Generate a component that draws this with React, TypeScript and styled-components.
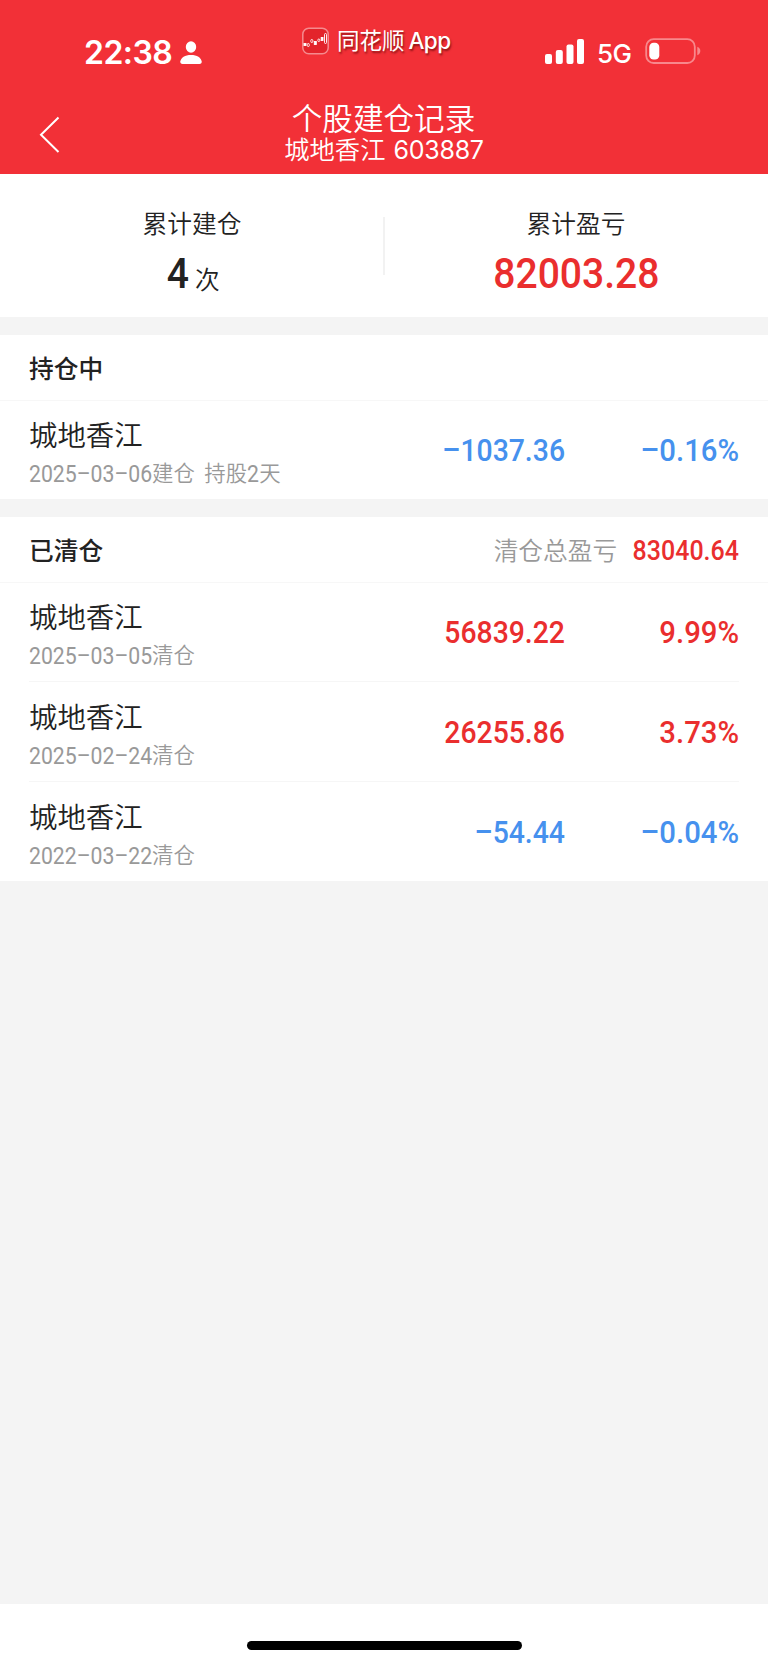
import React from "react";
import styled, { createGlobalStyle } from "styled-components";

const RED = "#ea2e2e";
const BLUE = "#4691ee";
const cjk = `"Noto Sans CJK SC", sans-serif`;

const GlobalStyle = createGlobalStyle`
  * { box-sizing: border-box; }
  body { margin: 0; background: #f4f4f4; font-family: ${cjk}; color: #222; }
`;

const Screen = styled.div`
  width: 768px;
  height: 1665px;
  display: flex;
  flex-direction: column;
  background: #f4f4f4;
  overflow: hidden;
`;

const Header = styled.header`
  flex: none;
  height: 174px;
  background: #f23037;
  color: #fff;
`;

const StatusBar = styled.div`
  display: grid;
  grid-template-columns: 302px 243px 1fr;
  height: 90px;
`;

const Clock = styled.div`
  display: flex;
  align-items: center;
  gap: 8px;
  height: 50px;
  margin: 28px 0 0 84px;
  font: 600 32px/50px Inter, sans-serif;
  letter-spacing: -0.55px;
`;

const AppBadge = styled.div`
  display: flex;
  align-items: center;
  height: 30px;
  margin-top: 26px;
  text-shadow: 1px 2px 2px rgba(80, 0, 0, 0.6);
`;

const BadgeName = styled.span`
  margin: 0 4px 4px 8px;
  font: 400 22.5px/30px ${cjk};
`;

const Latin = styled.span`
  margin-bottom: 1px;
  font: 500 22.5px/30px Inter, sans-serif;
  letter-spacing: -0.6px;
`;

const Signals = styled.div`
  display: flex;
  align-items: center;
  height: 50px;
  margin-top: 26px;
`;

const Network = styled.span`
  width: 48px;
  margin-left: 13px;
  padding-top: 5px;
  font: 500 26px/50px Inter, sans-serif;
  letter-spacing: -0.6px;
`;

const NavBar = styled.nav`
  display: grid;
  grid-template-columns: 80px 1fr 80px;
  height: 84px;
`;

const BackButton = styled.button`
  display: flex;
  align-items: flex-start;
  padding: 26px 0 0 39px;
  border: 0;
  background: none;
  color: inherit;
`;

const Titles = styled.div`
  text-align: center;
  padding-top: 9px;
`;

const Title = styled.h1`
  margin: 0 1px 0 0;
  font: 350 30.6px/36px ${cjk};
`;

const Subtitle = styled.div`
  display: flex;
  justify-content: center;
  gap: 8px;
  font: 350 25.3px/26px ${cjk};
`;

const Code = styled.span`
  padding-top: 2px;
  font: 400 25px/26px Inter, sans-serif;
  letter-spacing: -0.25px;
`;

const Summary = styled.section`
  flex: none;
  display: flex;
  height: 143px;
  padding-top: 29px;
  background: #fff;
`;

const Stat = styled.div`
  flex: 1;
  display: flex;
  flex-direction: column;
  align-items: center;
`;

const StatLabel = styled.div`
  font: 350 24.7px/38px ${cjk};
`;

const StatValue = styled.div`
  display: flex;
  align-items: center;
  height: 62px;
  margin-top: 2px;
`;

const Unit = styled.span`
  margin: 8px -2px 0 5px;
  font: 350 24.7px/40px ${cjk};
`;

const Divider = styled.div`
  width: 2px;
  height: 58px;
  margin: 14px -1px 0;
  background: #f2f2f2;
`;

const Figure = styled.span<{ $size: number; $color?: string; $center?: boolean; $squeeze?: number }>`
  font: 500 ${(p) => p.$size}px/1 Roboto, sans-serif;
  color: ${(p) => p.$color ?? "inherit"};
  transform: scaleX(${(p) => p.$squeeze ?? 0.93});
  transform-origin: ${(p) => (p.$center ? "center" : "right")};
  text-align: right;
  white-space: nowrap;
`;

const Section = styled.section`
  flex: none;
  margin-top: 18px;
  background: #fff;
`;

const SectionHead = styled.div`
  display: flex;
  align-items: center;
  height: 65.5px;
  padding: 0 29px 1px;
  border-bottom: 1.5px solid #f7f7f7;
`;

const SectionTitle = styled.h2`
  flex: 1;
  margin: 0;
  font: 500 24.7px/40px ${cjk};
`;

const TotalLabel = styled.span`
  margin-right: 7px;
  font: 350 24.7px/40px ${cjk};
  color: #999;
`;

const TotalValue = styled(Figure)`
  margin-top: 5px;
`;

const List = styled.ul`
  margin: 0;
  padding: 0 29px;
  list-style: none;
`;

const Row = styled.li`
  display: grid;
  grid-template-columns: 1fr 240px 174px;
  align-items: center;
  height: 100px;
  & + & { border-top: 1.5px solid #f6f6f6; }
  &:first-child { height: 98.5px; }
`;

const RowFigure = styled(Figure)`
  padding-top: 2px;
`;

const Stock = styled.div`
  height: 82px;
  padding-top: 5px;
`;

const StockName = styled.div`
  font: 350 28.4px/40px ${cjk};
`;

const Detail = styled.div`
  display: flex;
  height: 37px;
  font: 350 21.4px/36px ${cjk};
  color: #999;
  white-space: pre;
`;

const Digits = styled.span<{ $width: number }>`
  width: ${(p) => p.$width}px;
  padding-top: 2px;
  font: 400 23.3px/36px Roboto, sans-serif;
  transform: scaleX(0.91);
  transform-origin: left;
`;

const Filler = styled.div`
  flex: 1;
`;

const HomeArea = styled.footer`
  flex: none;
  height: 61px;
  padding-top: 37px;
  background: #fff;
`;

const HomeBar = styled.div`
  width: 275px;
  height: 9px;
  margin: 0 auto;
  border-radius: 5px;
  background: #000;
`;

const PersonIcon = () => (
  <svg width="22" height="24" viewBox="0 0 22 24" fill="#fff">
    <ellipse cx="11" cy="6" rx="5.2" ry="5.8" />
    <path d="M0.3 20.5C0.8 16.6 5 13.9 11 13.9s10.200 2.700 10.700 6.600c.2 1.600-.7 2.500-2.200 2.500h-17C1 23 .1 22.100.3 20.500z" />
  </svg>
);

const AppIcon = () => (
  <svg width="27" height="28" viewBox="0 0 27 28" fill="none">
    <rect x="0.8" y="1.300" width="25.400" height="25.400" rx="6" fill="#e3242b" stroke="#f58a8e" strokeWidth="1.500" />
    <g stroke="#fff" strokeWidth="0.900">
      <rect x="2" y="16.500" width="2" height="2" fill="#fff" />
      <rect x="5.300" y="16.500" width="2" height="3" rx="1" />
      <rect x="8.800" y="12.500" width="2" height="3" rx="1" />
      <rect x="12.300" y="14.500" width="2" height="3" fill="#fff" />
      <rect x="15.800" y="12" width="2" height="2.500" rx="1" />
      <rect x="19.200" y="10.500" width="1.800" height="3" fill="#fff" />
      <rect x="22.500" y="6.500" width="2" height="10" rx="1" />
    </g>
  </svg>
);

const SignalIcon = () => (
  <svg width="39" height="25" viewBox="0 0 39 25" fill="#fff">
    <rect x="0" y="15" width="7" height="10" rx="2" />
    <rect x="10.800" y="11" width="7" height="14" rx="2" />
    <rect x="21.500" y="5.500" width="7" height="19.500" rx="2" />
    <rect x="32" y="0" width="7" height="25" rx="2" />
  </svg>
);

const BatteryIcon = () => (
  <svg width="57" height="26" viewBox="0 0 57 26">
    <rect x="1.200" y="1.200" width="48.600" height="23.800" rx="7.500" fill="none" stroke="#f8888c" strokeWidth="1.800" />
    <rect x="4.300" y="4.700" width="10" height="16.800" rx="4.300" fill="#fff" />
    <path d="M52.300 8.800c2 .7 3 2.300 3 4.200s-1 3.500-3 4.200z" fill="#f8888c" />
  </svg>
);

const BackIcon = () => (
  <svg width="22" height="37" viewBox="0 0 22 37" fill="none" stroke="#fff" strokeWidth="2">
    <path d="M19.500 1.500L2 18.700L19.500 36" />
  </svg>
);

type Holding = { date: string; note: string; profit: string; rate: string; days?: string };

const held: Holding[] = [
  { date: "2025–03–06", note: "建仓", days: "2", profit: "–1037.36", rate: "–0.16%" },
];

const closed: Holding[] = [
  { date: "2025–03–05", note: "清仓", profit: "56839.22", rate: "9.99%" },
  { date: "2025–02–24", note: "清仓", profit: "26255.86", rate: "3.73%" },
  { date: "2022–03–22", note: "清仓", profit: "–54.44", rate: "–0.04%" },
];

const HoldingRow = ({ item }: { item: Holding }) => {
  const color = item.profit.startsWith("–") ? BLUE : RED;
  return (
    <Row>
      <Stock>
        <StockName>城地香江</StockName>
        <Detail>
          <Digits $width={123}>{item.date}</Digits>
          {item.note}
          {item.days && (
            <>
              {"  持股"}
              <Digits $width={12}>{item.days}</Digits>天
            </>
          )}
        </Detail>
      </Stock>
      <RowFigure $size={31} $color={color} $squeeze={0.915}>{item.profit}</RowFigure>
      <RowFigure $size={31} $color={color} $squeeze={0.945}>{item.rate}</RowFigure>
    </Row>
  );
};

export default function App() {
  return (
    <>
      <GlobalStyle />
      <Screen>
        <Header>
          <StatusBar>
            <Clock>
              22:38
              <PersonIcon />
            </Clock>
            <AppBadge>
              <AppIcon />
              <BadgeName>同花顺</BadgeName>
              <Latin>App</Latin>
            </AppBadge>
            <Signals>
              <SignalIcon />
              <Network>5G</Network>
              <BatteryIcon />
            </Signals>
          </StatusBar>
          <NavBar>
            <BackButton aria-label="返回">
              <BackIcon />
            </BackButton>
            <Titles>
              <Title>个股建仓记录</Title>
              <Subtitle>
                城地香江<Code>603887</Code>
              </Subtitle>
            </Titles>
          </NavBar>
        </Header>

        <Summary>
          <Stat>
            <StatLabel>累计建仓</StatLabel>
            <StatValue>
              <Figure $size={42} $center>4</Figure>
              <Unit>次</Unit>
            </StatValue>
          </Stat>
          <Divider />
          <Stat>
            <StatLabel>累计盈亏</StatLabel>
            <StatValue>
              <Figure $size={42} $color={RED} $center>82003.28</Figure>
            </StatValue>
          </Stat>
        </Summary>

        <Section>
          <SectionHead>
            <SectionTitle>持仓中</SectionTitle>
          </SectionHead>
          <List>
            {held.map((item) => (
              <HoldingRow key={item.date} item={item} />
            ))}
          </List>
        </Section>

        <Section>
          <SectionHead>
            <SectionTitle>已清仓</SectionTitle>
            <TotalLabel>清仓总盈亏</TotalLabel>
            <TotalValue $size={27} $color={RED} $squeeze={0.925}>83040.64</TotalValue>
          </SectionHead>
          <List>
            {closed.map((item) => (
              <HoldingRow key={item.date} item={item} />
            ))}
          </List>
        </Section>

        <Filler />
        <HomeArea>
          <HomeBar />
        </HomeArea>
      </Screen>
    </>
  );
}
